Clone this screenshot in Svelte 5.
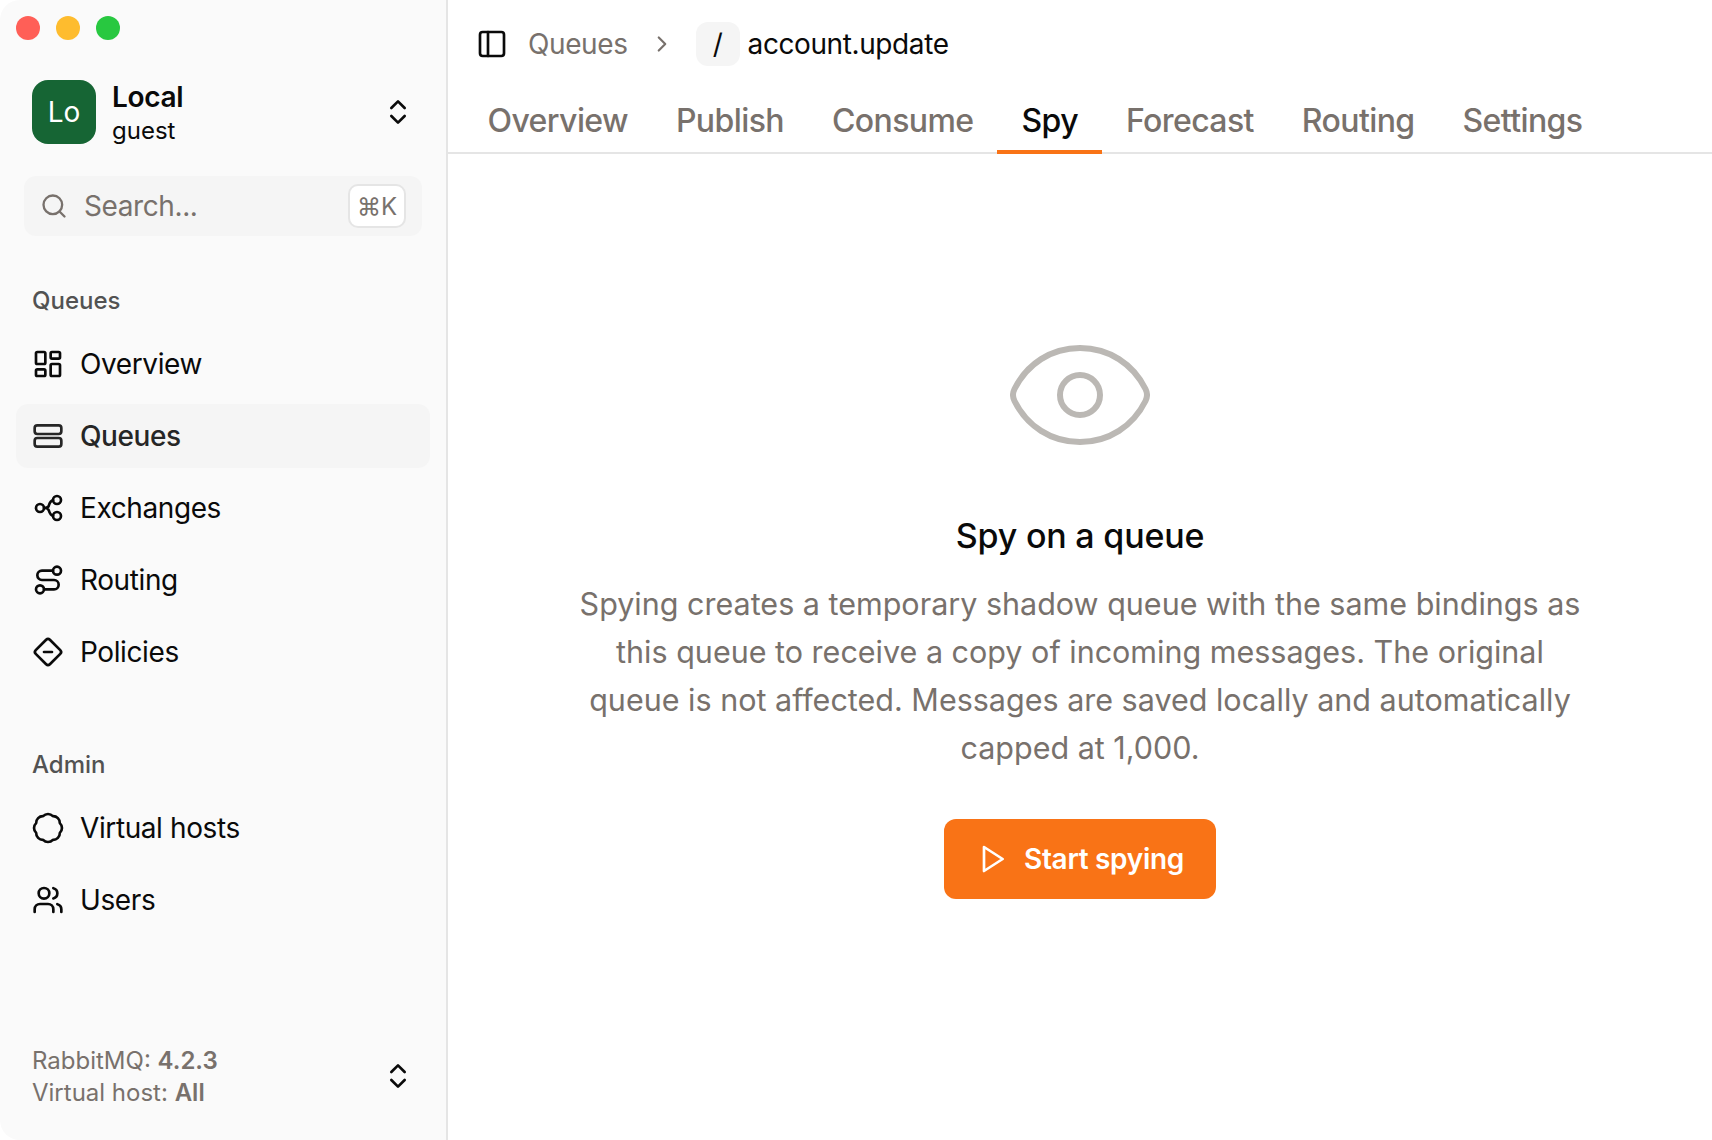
<script>
  const queueLinks = [
    { label: 'Overview', icon: 'overview' },
    { label: 'Queues', icon: 'queues', active: true },
    { label: 'Exchanges', icon: 'exchanges' },
    { label: 'Routing', icon: 'routing' },
    { label: 'Policies', icon: 'policies' }
  ];
  const adminLinks = [
    { label: 'Virtual hosts', icon: 'vhosts' },
    { label: 'Users', icon: 'users' }
  ];
  const tabs = ['Overview', 'Publish', 'Consume', 'Spy', 'Forecast', 'Routing', 'Settings'];
</script>

{#snippet navIcon(name)}
  <svg class="icon" viewBox="0 0 24 24">
    {#if name === 'overview'}
      <rect x="3" y="3" width="7" height="9" rx="1" />
      <rect x="14" y="3" width="7" height="5" rx="1" />
      <rect x="14" y="12" width="7" height="9" rx="1" />
      <rect x="3" y="16" width="7" height="5" rx="1" />
    {:else if name === 'queues'}
      <rect x="2" y="4" width="20" height="6.500" rx="2" />
      <rect x="2" y="13.500" width="20" height="6.500" rx="2" />
    {:else if name === 'exchanges'}
      <circle cx="6" cy="12" r="3" />
      <circle cx="18.750" cy="6" r="3" />
      <circle cx="18.750" cy="18" r="3" />
      <path d="M15.800 6.200C13.500 6.600 13 9 12.500 10.500 12.200 11.500 11 12 9 12c2 0 3.200.5 3.500 1.500.5 1.500 1 3.900 3.300 4.300" />
    {:else if name === 'routing'}
      <circle cx="18.750" cy="5" r="3" />
      <circle cx="6" cy="19" r="3" />
      <path d="M15.750 5H7.500a3.500 3.500 0 0 0 0 7h9a3.500 3.500 0 0 1 0 7H9" />
    {:else if name === 'policies'}
      <path d="M10.600 2.800a2 2 0 0 1 2.800 0l7.800 7.800a2 2 0 0 1 0 2.800l-7.800 7.800a2 2 0 0 1-2.800 0l-7.800-7.800a2 2 0 0 1 0-2.800z" />
      <path d="M9 12h6" />
    {:else if name === 'vhosts'}
      <path d="M15.670 3.130A5 5 0 0 1 20.870 8.330 5 5 0 0 1 20.870 15.670 5 5 0 0 1 15.670 20.870 5 5 0 0 1 8.330 20.870 5 5 0 0 1 3.130 15.670 5 5 0 0 1 3.130 8.330 5 5 0 0 1 8.330 3.130 5 5 0 0 1 15.670 3.130Z" />
    {:else if name === 'users'}
      <path d="M16 21v-2a4 4 0 0 0-4-4H6a4 4 0 0 0-4 4v2" />
      <circle cx="9" cy="7" r="4" />
      <path d="M22 21v-2a4 4 0 0 0-3-3.870" />
      <path d="M16 3.130a4 4 0 0 1 0 7.750" />
    {/if}
  </svg>
{/snippet}

{#snippet updown()}
  <svg class="icon updown" viewBox="0 0 24 24">
    <path d="m7 15 5 5 5-5" />
    <path d="m7 9 5-5 5 5" />
  </svg>
{/snippet}

<div class="window">
  <aside class="sidebar">
    <div class="traffic">
      <span class="light red"></span>
      <span class="light yellow"></span>
      <span class="light green"></span>
    </div>

    <div class="account">
      <div class="avatar">Lo</div>
      <div class="who">
        <div class="name">Local</div>
        <div class="user">guest</div>
      </div>
      {@render updown()}
    </div>

    <div class="search">
      <svg class="search-icon" viewBox="0 0 24 24">
        <circle cx="11" cy="11" r="8" />
        <path d="m21 21-4.300-4.300" />
      </svg>
      <span class="placeholder">Search...</span>
      <kbd>⌘K</kbd>
    </div>

    <div class="group-label">Queues</div>
    <nav>
      {#each queueLinks as link}
        <div class="nav-item" class:active={link.active}>
          {@render navIcon(link.icon)}
          <span>{link.label}</span>
        </div>
      {/each}
    </nav>

    <div class="group-label admin">Admin</div>
    <nav>
      {#each adminLinks as link}
        <div class="nav-item">
          {@render navIcon(link.icon)}
          <span>{link.label}</span>
        </div>
      {/each}
    </nav>

    <div class="footer">
      <div class="footer-text">
        <div>RabbitMQ: <b>4.2.3</b></div>
        <div>Virtual host: <b>All</b></div>
      </div>
      {@render updown()}
    </div>
  </aside>

  <main>
    <div class="crumbs">
      <svg class="icon" viewBox="0 0 24 24">
        <rect x="3" y="3" width="18" height="18" rx="2" />
        <path d="M9 3v18" />
      </svg>
      <span class="crumb">Queues</span>
      <svg class="crumb-chevron" viewBox="0 0 24 24">
        <path d="m9 18 6-6-6-6" />
      </svg>
      <span class="slash">/</span>
      <span class="queue-name">account.update</span>
    </div>

    <div class="tabs">
      {#each tabs as tab}
        <div class="tab" class:selected={tab === 'Spy'}>{tab}</div>
      {/each}
    </div>

    <section class="empty">
      <svg class="eye" viewBox="0 0 140 100">
        <path d="M4.500 44C17 19 41 3 70 3s53 16 65.500 41q3 6 0 12C123 81 99 97 70 97S17 81 4.500 56q-3-6 0-12Z" />
        <circle cx="70" cy="50" r="20" />
      </svg>
      <h2>Spy on a queue</h2>
      <p>
        Spying creates a temporary shadow queue with the same bindings as this queue to receive a
        copy of incoming messages. The original queue is not affected. Messages are saved locally
        and automatically capped at 1,000.
      </p>
      <button type="button">
        <svg class="icon play" viewBox="0 0 24 24">
          <polygon points="6 3 20 12 6 21 6 3" />
        </svg>
        Start spying
      </button>
    </section>
  </main>
</div>

<style>
  :global(body) {
    margin: 0;
    background: #fff;
  }

  .window {
    display: flex;
    height: 1140px;
    font-family: Inter, "Liberation Sans", sans-serif;
    color: #0a0a0a;
  }

  .icon {
    width: 32px;
    height: 32px;
    flex: none;
    fill: none;
    stroke: currentColor;
    stroke-width: 2;
    stroke-linecap: round;
    stroke-linejoin: round;
  }

  /* Sidebar */
  .sidebar {
    width: 446px;
    flex: none;
    display: flex;
    flex-direction: column;
    background: #fafafa;
    border-right: 2px solid #e5e5e5;
    border-radius: 20px 0 0 20px;
  }

  .traffic {
    display: flex;
    gap: 16px;
    padding: 16px 16px 0;
  }

  .light {
    width: 24px;
    height: 24px;
    border-radius: 50%;
  }
  .red { background: #ff5f57; }
  .yellow { background: #febc2e; }
  .green { background: #28c840; }

  .account {
    display: flex;
    align-items: center;
    gap: 16px;
    margin-top: 40px;
    padding: 0 32px;
    height: 64px;
  }

  .avatar {
    width: 64px;
    height: 64px;
    flex: none;
    display: flex;
    align-items: center;
    justify-content: center;
    border-radius: 16px;
    background: #166534;
    color: #fff;
    font-size: 28px;
  }

  .who {
    flex: 1;
    padding-top: 4px;
  }

  .name {
    font-size: 28px;
    line-height: 34px;
    font-weight: 600;
    letter-spacing: -0.3px;
  }

  .user {
    font-size: 24px;
    line-height: 34px;
  }

  .search {
    display: flex;
    align-items: center;
    height: 60px;
    margin: 32px 24px 0;
    padding: 0 16px;
    background: #f5f5f5;
    border-radius: 12px;
    color: #78716c;
  }

  .search-icon {
    width: 28px;
    height: 28px;
    flex: none;
    fill: none;
    stroke: currentColor;
    stroke-width: 2;
    stroke-linecap: round;
    stroke-linejoin: round;
  }

  .placeholder {
    flex: 1;
    margin-left: 16px;
    font-size: 28px;
    letter-spacing: -0.4px;
  }

  kbd {
    box-sizing: border-box;
    width: 58px;
    height: 44px;
    display: flex;
    align-items: center;
    justify-content: center;
    background: #fff;
    border: 2px solid #e5e5e5;
    border-radius: 10px;
    font-family: Inter, "DejaVu Sans", sans-serif;
    font-size: 24px;
  }

  .group-label {
    margin: 49px 0 15px 32px;
    font-size: 24px;
    line-height: 32px;
    font-weight: 500;
    color: #525252;
  }

  .group-label.admin {
    margin-top: 65px;
  }

  nav {
    display: flex;
    flex-direction: column;
    gap: 8px;
    margin: 0 16px;
  }

  .nav-item {
    display: flex;
    align-items: center;
    gap: 16px;
    height: 64px;
    padding: 0 16px;
    border-radius: 12px;
    font-size: 28px;
    letter-spacing: -0.4px;
  }

  .nav-item.active {
    background: #f5f5f5;
    color: #262626;
    font-weight: 500;
  }

  .footer {
    margin-top: auto;
    display: flex;
    align-items: center;
    justify-content: space-between;
    padding: 0 32px 31px;
  }

  .footer .updown {
    margin-bottom: 2px;
  }

  .footer-text {
    font-size: 24px;
    line-height: 32px;
    color: #78716c;
  }

  .footer-text b {
    font-weight: 600;
  }

  /* Main */
  main {
    flex: 1;
    min-width: 0;
    display: flex;
    flex-direction: column;
  }

  .crumbs {
    display: flex;
    align-items: center;
    height: 88px;
    padding-left: 28px;
    font-size: 28px;
    letter-spacing: -0.4px;
  }

  .crumb {
    margin-left: 20px;
    color: #78716c;
  }

  .crumb-chevron {
    width: 26px;
    height: 26px;
    margin-left: 21px;
    fill: none;
    stroke: #78716c;
    stroke-width: 2;
    stroke-linecap: round;
    stroke-linejoin: round;
  }

  .slash {
    width: 44px;
    height: 44px;
    margin: 0 8px 0 21px;
    display: flex;
    align-items: center;
    justify-content: center;
    background: #f5f5f5;
    border-radius: 12px;
  }

  .tabs {
    display: flex;
    height: 64px;
    padding-left: 15.500px;
    border-bottom: 2px solid #e5e5e5;
  }

  .tab {
    display: flex;
    align-items: center;
    height: 66px;
    box-sizing: border-box;
    padding: 0 24px 2px;
    font-size: 32px;
    font-weight: 500;
    letter-spacing: -0.6px;
    color: #78716c;
  }

  .tab.selected {
    color: #0a0a0a;
    border-bottom: 4px solid #f97316;
    padding-top: 2px;
    padding-bottom: 0;
  }

  .empty {
    display: flex;
    flex-direction: column;
    align-items: center;
    padding-top: 191px;
  }

  .eye {
    width: 140px;
    height: 100px;
    fill: none;
    stroke: #bbb8b4;
    stroke-width: 6;
    stroke-linejoin: round;
  }

  h2 {
    margin: 67px 0 20px;
    font-size: 34px;
    line-height: 48px;
    font-weight: 500;
    letter-spacing: -0.2px;
    color: #0a0a0a;
  }

  p {
    width: 1016px;
    margin: 0;
    font-size: 30.500px;
    line-height: 48px;
    text-align: center;
    color: #78716c;
  }

  button {
    display: flex;
    align-items: center;
    gap: 16px;
    height: 80px;
    margin-top: 47px;
    padding: 0 32px;
    border: none;
    border-radius: 12px;
    background: #f97316;
    color: #fff;
    font-family: inherit;
    font-size: 28px;
    font-weight: 600;
    letter-spacing: -0.3px;
  }
</style>
